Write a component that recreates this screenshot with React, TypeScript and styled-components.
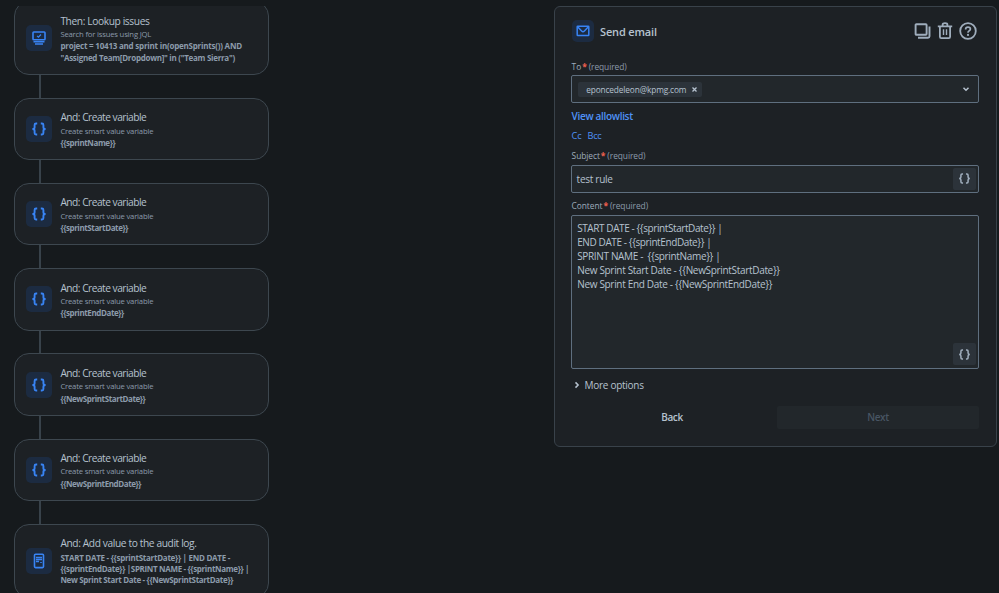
import React from "react";
import styled, { createGlobalStyle } from "styled-components";

const GlobalStyle = createGlobalStyle`
  * { box-sizing: border-box; }
  body { margin: 0; background: #161a1d; overflow: hidden; }
  button { font: inherit; border: 0; padding: 0; }
`;

const Page = styled.div`
  width: 999px;
  height: 593px;
  padding-top: 6px;
  display: flex;
  overflow: hidden;
  background: #161a1d;
  color: #b6c2cf;
  font-family: "Open Sans", "Noto Sans", sans-serif;
  font-size: 10px;
`;

const RuleChain = styled.div`
  width: 255px;
  height: 587px;
  margin: 0 285px 0 14px;
  overflow: hidden;
`;

const Steps = styled.div`
  display: flex;
  flex-direction: column;
  margin-top: -5px;
`;

const StepCard = styled.div<{ $height: number }>`
  flex: none;
  height: ${(p) => p.$height}px;
  display: flex;
  align-items: center;
  gap: 8.4px;
  padding: 0 10px 0 11px;
  border: 1px solid #3d474f;
  border-radius: 15px;
  background: #1d2125;
`;

const Connector = styled.div`
  flex: none;
  width: 2px;
  height: 22.8px;
  margin-left: 25px;
  background: #38424a;
`;

const IconTile = styled.div<{ $size: number }>`
  flex: none;
  width: ${(p) => p.$size}px;
  height: ${(p) => p.$size}px;
  display: flex;
  align-items: center;
  justify-content: center;
  border-radius: 5px;
  background: #1c2b41;
  color: #3884f5;
`;

const StepTitle = styled.div<{ $spacing: number }>`
  margin-top: -0.4px;
  padding-bottom: 0.4px;
  font-size: 10.2px;
  line-height: 16px;
  letter-spacing: ${(p) => p.$spacing}px;
  white-space: nowrap;
`;

const StepText = styled.div`
  font-size: 7.7px;
  line-height: 11.4px;
  letter-spacing: -0.19px;
  color: #8c9bab;
  white-space: nowrap;
`;

const StepValue = styled(StepText)<{ $spacing?: number }>`
  font-size: 8px;
  font-weight: 700;
  letter-spacing: ${(p) => p.$spacing ?? -0.24}px;
`;

const Panel = styled.section`
  width: 443px;
  height: 441px;
  padding: 13px 17px 0 16px;
  display: flex;
  flex-direction: column;
  border: 1px solid #39424a;
  border-radius: 6px;
  background: #1d2125;
`;

const PanelHeader = styled.header`
  height: 22px;
  display: flex;
  align-items: center;
  padding-left: 1px;
`;

const PanelTitle = styled.h1`
  margin: 0 auto 0 6px;
  font-size: 11px;
  font-weight: 600;
  letter-spacing: -0.15px;
`;

const HeaderActions = styled.div`
  display: flex;
  align-items: center;
  gap: 5.7px;
  padding-right: 2px;
  color: #9fadbc;
`;

const Label = styled.label<{ $top: number }>`
  display: block;
  margin-top: ${(p) => p.$top}px;
  margin-bottom: 2.5px;
  padding-left: 0.6px;
  height: 12px;
  line-height: 12px;
  font-size: 8.4px;
  letter-spacing: -0.06px;
  color: #9fadbc;
`;

const Required = styled.span`
  margin: 0 2px 0 1px;
  color: #f0604f;
  font-size: 8.4px;
  font-weight: 700;
`;

const Hint = styled.span`
  color: #8c9bab;
`;

const Field = styled.div<{ $height: number; $tall?: boolean }>`
  flex: none;
  height: ${(p) => p.$height}px;
  display: flex;
  align-items: ${(p) => (p.$tall ? "flex-end" : "center")};
  justify-content: space-between;
  padding: ${(p) => (p.$tall ? "5px 2px 2.5px 5.2px" : "0 2px 0 4.6px")};
  border: 1px solid #5f6f7f;
  border-radius: 2px;
  background: #22272b;
`;

const Chip = styled.span`
  height: 15px;
  display: inline-flex;
  align-items: center;
  gap: 6px;
  margin-left: 1.6px;
  padding: 0 4.5px 0 8px;
  border-radius: 2px;
  background: #2c333a;
  font-size: 8.3px;
  letter-spacing: -0.13px;
`;

const ChevronSlot = styled.span`
  display: flex;
  margin-right: 6px;
`;

const FieldText = styled.span`
  letter-spacing: -0.27px;
`;

const ContentText = styled.div`
  align-self: flex-start;
`;

const ContentLine = styled.div<{ $spacing: number }>`
  height: 14.2px;
  line-height: 14.2px;
  letter-spacing: ${(p) => p.$spacing}px;
  white-space: pre;
`;

const SmartValueButton = styled.button`
  width: 23px;
  height: 22px;
  display: flex;
  align-items: center;
  justify-content: center;
  border-radius: 2px;
  background: #2c333a;
  color: #9fadbc;
`;

const AllowlistLink = styled.a`
  margin-top: 6px;
  padding-left: 0.6px;
  height: 14px;
  line-height: 14px;
  font-weight: 600;
  letter-spacing: -0.31px;
  color: #4f92f7;
`;

const CopyLinks = styled.div`
  display: flex;
  gap: 6px;
  margin-top: 6px;
  padding-left: 0.6px;
  height: 14px;
  line-height: 14px;
  font-size: 9.2px;
  letter-spacing: -0.2px;
  color: #4f92f7;
`;

const MoreOptions = styled.div`
  display: flex;
  align-items: center;
  gap: 4px;
  margin-top: 9px;
  padding-left: 1.5px;
  height: 14px;
  line-height: 14px;
  letter-spacing: -0.27px;
`;

const Footer = styled.footer`
  display: grid;
  grid-template-columns: 1fr 202px;
  gap: 4px;
  margin-top: 14px;
`;

const FooterButton = styled.button<{ $disabled?: boolean }>`
  height: 23px;
  border-radius: 2px;
  font-weight: 600;
  letter-spacing: -0.35px;
  color: ${(p) => (p.$disabled ? "#485563" : "#b6c2cf")};
  background: ${(p) => (p.$disabled ? "#22272b" : "transparent")};
`;

const Braces = ({ size, stroke }: { size: number; stroke: number }) => (
  <svg width={size} height={size} viewBox="0 0 16 16" fill="none" stroke="currentColor" strokeWidth={stroke}>
    <path d="M6.2 2.5H5Q3.6 2.5 3.6 4V6.2Q3.6 8 1.4 8Q3.6 8 3.6 9.8V12Q3.6 13.5 5 13.5H6.2" />
    <path d="M9.8 2.5H11Q12.4 2.5 12.4 4V6.2Q12.4 8 14.6 8Q12.4 8 12.4 9.8V12Q12.4 13.5 11 13.5H9.8" />
  </svg>
);

const LookupIcon = () => (
  <svg width="14" height="14" viewBox="0 0 14 14" fill="none" stroke="currentColor" strokeWidth="1.6">
    <rect x="1" y="1" width="12" height="7.8" rx="0.8" />
    <path d="M5 4.9L6.4 6.2L9 3.5" strokeWidth="1.2" />
    <path d="M1.5 10.8H12.5M3 13H11" strokeWidth="1.5" />
  </svg>
);

const LogIcon = () => (
  <svg width="12" height="16" viewBox="0 0 12 16" fill="none" stroke="currentColor" strokeWidth="1.6">
    <rect x="1.5" y="1.2" width="9" height="13.4" rx="1" />
    <path d="M3 4.5H9M3 6.5H9M3 8.5H6" strokeWidth="1.3" />
    <path d="M7 9.5H9" strokeWidth="0.8" />
  </svg>
);

const MailIcon = () => (
  <svg width="14" height="12" viewBox="0 0 14 12" fill="none" stroke="currentColor" strokeWidth="1.5">
    <rect x="1.2" y="1.2" width="11.6" height="9.4" rx="0.6" />
    <path d="M1.6 1.8L5.6 6Q7 7.3 8.4 6L12.4 1.8" />
  </svg>
);

const CopyIcon = () => (
  <svg width="18" height="18" viewBox="0 0 18 18" fill="none" stroke="currentColor" strokeWidth="1.9">
    <rect x="1.6" y="2.2" width="11" height="10.6" rx="0.8" />
    <path d="M15.5 4.5V14.2Q15.5 15.7 14 15.7H4" />
  </svg>
);

const TrashIcon = () => (
  <svg width="16" height="18" viewBox="0 0 16 18" fill="none" stroke="currentColor" strokeWidth="1.8">
    <path d="M0.8 4.3H15.2M5.6 4V2.7Q5.6 1.2 8 1.2Q10.4 1.2 10.4 2.7V4" />
    <path d="M2.9 4.5V14.8Q2.9 16.2 4.3 16.2H11.7Q13.1 16.2 13.1 14.8V4.5" />
    <path d="M6.5 7.3V13M9.5 7.3V13" strokeWidth="1.4" />
  </svg>
);

const HelpIcon = () => (
  <svg width="18" height="18" viewBox="0 0 18 18" fill="none" stroke="currentColor" strokeWidth="1.8">
    <circle cx="9" cy="9" r="7.8" />
    <path d="M6.6 7.4Q6.6 5.1 9 5.1Q11.4 5.1 11.4 7.1Q11.4 8.3 10 9Q9 9.5 9 10.7" strokeWidth="1.7" />
    <circle cx="9" cy="12.9" r="1.1" fill="currentColor" stroke="none" />
  </svg>
);

const Chevron = ({ right }: { right?: boolean }) => (
  <svg width="8" height="8" viewBox="0 0 8 8" fill="none" stroke="currentColor" strokeWidth="1.5">
    <path d={right ? "M2.5 1.4L5.1 4L2.5 6.6" : "M1.5 2.8L4 5.2L6.5 2.8"} />
  </svg>
);

const CrossIcon = () => (
  <svg width="5" height="5" viewBox="0 0 5 5" fill="none" stroke="currentColor" strokeWidth="1.3">
    <path d="M0.5 0.5L4.5 4.5M4.5 0.5L0.5 4.5" />
  </svg>
);

const variables = [
  "{{sprintName}}",
  "{{sprintStartDate}}",
  "{{sprintEndDate}}",
  "{{NewSprintStartDate}}",
  "{{NewSprintEndDate}}",
];

const contentLines = [
  { text: "START DATE - {{sprintStartDate}} |", spacing: -0.41 },
  { text: "END DATE - {{sprintEndDate}} |", spacing: -0.4 },
  { text: "SPRINT NAME -  {{sprintName}} |", spacing: -0.34 },
  { text: "New Sprint Start Date - {{NewSprintStartDate}}", spacing: -0.32 },
  { text: "New Sprint End Date - {{NewSprintEndDate}}", spacing: -0.32 },
];

const FieldLabel = ({ text, top }: { text: string; top: number }) => (
  <Label $top={top}>
    {text}
    <Required>*</Required>
    <Hint>(required)</Hint>
  </Label>
);

export default function App() {
  return (
    <Page>
      <GlobalStyle />
      <RuleChain>
        <Steps>
          <StepCard $height={74}>
            <IconTile $size={26}><LookupIcon /></IconTile>
            <div>
              <StepTitle $spacing={-0.38}>Then: Lookup issues</StepTitle>
              <StepText>Search for issues using JQL</StepText>
              <StepValue $spacing={-0.22}>project = 10413 and sprint in(openSprints()) AND</StepValue>
              <StepValue $spacing={-0.28}>"Assigned Team[Dropdown]" in ("Team Sierra")</StepValue>
            </div>
          </StepCard>
          {variables.map((name) => (
            <React.Fragment key={name}>
              <Connector />
              <StepCard $height={62.4}>
                <IconTile $size={26}><Braces size={16} stroke={1.9} /></IconTile>
                <div>
                  <StepTitle $spacing={-0.5}>And: Create variable</StepTitle>
                  <StepText>Create smart value variable</StepText>
                  <StepValue $spacing={-0.4}>{name}</StepValue>
                </div>
              </StepCard>
            </React.Fragment>
          ))}
          <Connector />
          <StepCard $height={74}>
            <IconTile $size={26}><LogIcon /></IconTile>
            <div>
              <StepTitle $spacing={-0.38}>And: Add value to the audit log.</StepTitle>
              <StepValue $spacing={-0.27}>START DATE - {"{{sprintStartDate}}"} | END DATE -</StepValue>
              <StepValue $spacing={-0.33}>{"{{sprintEndDate}} |SPRINT NAME - {{sprintName}} |"}</StepValue>
              <StepValue $spacing={-0.33}>New Sprint Start Date - {"{{NewSprintStartDate}}"}</StepValue>
            </div>
          </StepCard>
        </Steps>
      </RuleChain>

      <Panel>
        <PanelHeader>
          <IconTile $size={22}><MailIcon /></IconTile>
          <PanelTitle>Send email</PanelTitle>
          <HeaderActions>
            <CopyIcon />
            <TrashIcon />
            <HelpIcon />
          </HeaderActions>
        </PanelHeader>

        <FieldLabel text="To" top={18.5} />
        <Field $height={28}>
          <Chip>eponcedeleon@kpmg.com<CrossIcon /></Chip>
          <ChevronSlot><Chevron /></ChevronSlot>
        </Field>
        <AllowlistLink>View allowlist</AllowlistLink>
        <CopyLinks><span>Cc</span><span>Bcc</span></CopyLinks>

        <FieldLabel text="Subject" top={7} />
        <Field $height={28.5}>
          <FieldText>test rule</FieldText>
          <SmartValueButton><Braces size={13} stroke={1.9} /></SmartValueButton>
        </Field>

        <FieldLabel text="Content" top={7.2} />
        <Field $height={154} $tall>
          <ContentText>
            {contentLines.map((l) => (
              <ContentLine key={l.text} $spacing={l.spacing}>{l.text}</ContentLine>
            ))}
          </ContentText>
          <SmartValueButton><Braces size={13} stroke={1.9} /></SmartValueButton>
        </Field>

        <MoreOptions><Chevron right />More options</MoreOptions>
        <Footer>
          <FooterButton>Back</FooterButton>
          <FooterButton $disabled>Next</FooterButton>
        </Footer>
      </Panel>
    </Page>
  );
}
